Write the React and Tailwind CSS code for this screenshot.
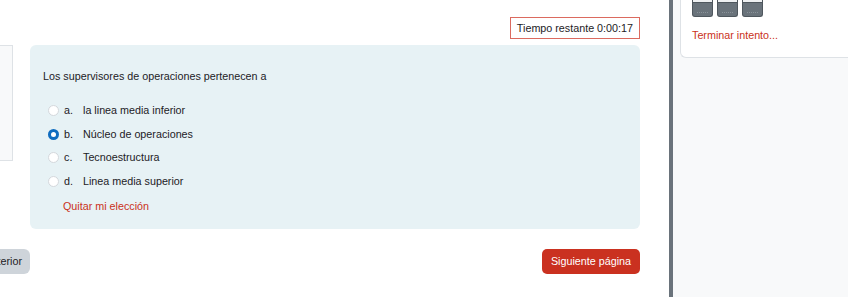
import React from "react";

const options = [
  { letter: "a.", text: "la linea media inferior", checked: false },
  { letter: "b.", text: "Núcleo de operaciones", checked: true },
  { letter: "c.", text: "Tecnoestructura", checked: false },
  { letter: "d.", text: "Linea media superior", checked: false },
];

function Radio({ checked }) {
  if (checked) {
    return (
      <span className="w-[11px] h-[11px] rounded-full bg-[#0f6cbf] flex items-center justify-center shrink-0">
        <span className="w-[5px] h-[5px] rounded-full bg-white" />
      </span>
    );
  }
  return <span className="w-[11px] h-[11px] rounded-full border border-[#d4d8dc] bg-white shrink-0" />;
}

function NavButton() {
  return (
    <div className="w-[21px] h-[17px] rounded-b-[3px] border border-t-0 border-[#4f575e] bg-[#6a737b] flex flex-col overflow-hidden">
      <div className="h-[3px] bg-[#eef0f2] border-b border-[#4f575e]" />
      <div className="flex-1 flex items-end justify-center pb-[3px]">
        <div className="w-[11px] border-b border-dotted border-[#8a9299]" />
      </div>
    </div>
  );
}

export default function App() {
  return (
    <div className="flex h-[297px] w-[848px] overflow-hidden bg-white text-[#1d2125] text-[10.75px] font-['Liberation_Sans',Arial,sans-serif]">
      {/* main quiz column */}
      <div className="w-[668px] shrink-0 flex flex-col pt-[17px]">
        <div className="flex justify-end pr-[28px]">
          <div className="h-[22px] px-[6px] flex items-center border border-[#db6a5f]">
            Tiempo restante 0:00:17
          </div>
        </div>

        <div className="flex mt-[6px]">
          <div className="w-[13px] h-[116px] shrink-0 bg-[#f8f9fa] border border-l-0 border-[#dee2e6]" />
          <div className="ml-[17px] w-[610px] h-[184px] rounded-[6px] bg-[#e7f2f5] pl-[13px] pt-[24px]">
            <p className="leading-[15px]">Los supervisores de operaciones pertenecen a</p>
            <div className="mt-[19px] flex flex-col gap-[8.5px]">
              {options.map((o) => (
                <div key={o.letter} className="flex items-center h-[15px] pl-[5px]">
                  <Radio checked={o.checked} />
                  <span className="ml-[5px] w-[19px]">{o.letter}</span>
                  <span>{o.text}</span>
                </div>
              ))}
            </div>
            <div className="mt-[9px] pl-[20px] text-[#ca3120]">Quitar mi elección</div>
          </div>
        </div>

        <div className="flex items-center justify-between mt-[20px] pr-[28px]">
          <div className="h-[25px] w-[30px] rounded-r-[6px] bg-[#ced4da] flex items-center justify-end pr-[8px] overflow-hidden whitespace-nowrap">
            Página anterior
          </div>
          <div className="h-[25px] px-[9px] rounded-[5px] bg-[#ca3120] text-white flex items-center">
            Siguiente página
          </div>
        </div>
      </div>

      {/* drawer divider */}
      <div className="w-[4px] shrink-0 bg-[#6a737b] ml-[1px]" />

      {/* right drawer */}
      <div className="flex-1 bg-[#f8f9fa] pl-[7px]">
        <div className="h-[58px] bg-white border-l border-b border-[#dee2e6] rounded-bl-[6px] pl-[11px]">
          <div className="flex gap-[4px]">
            <NavButton />
            <NavButton />
            <NavButton />
          </div>
          <div className="mt-[10px] text-[#ca3120]">Terminar intento...</div>
        </div>
      </div>
    </div>
  );
}
